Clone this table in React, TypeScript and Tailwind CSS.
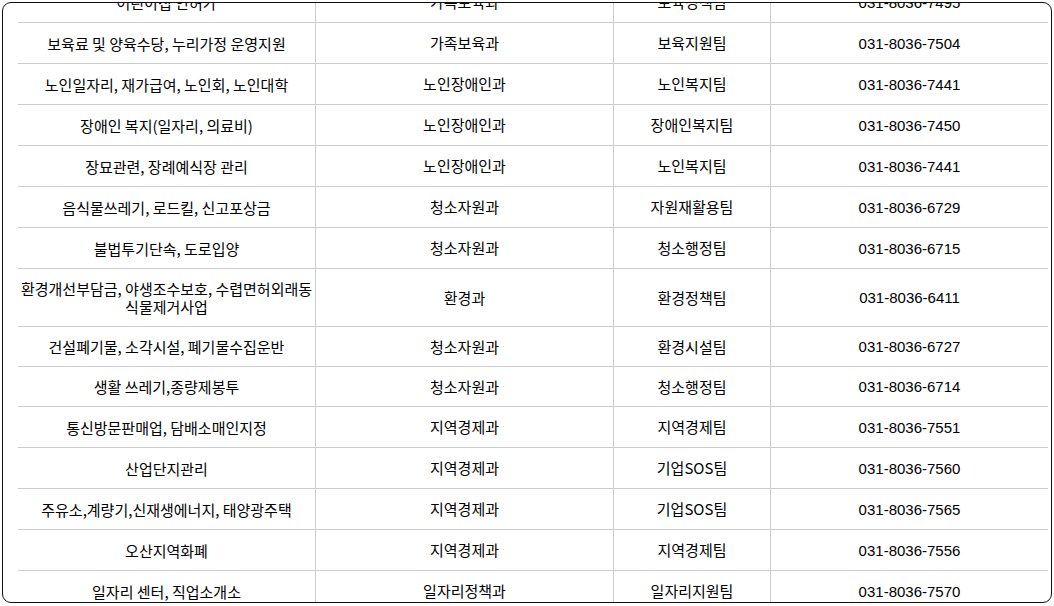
import React from "react";

type Row = { a: React.ReactNode; b: string; c: string; d: string; h: string };

const rows: Row[] = [
  { a: "어린이집 인허가", b: "가족보육과", c: "보육정책팀", d: "031-8036-7495", h: "h-[41px]" },
  { a: "보육료 및 양육수당, 누리가정 운영지원", b: "가족보육과", c: "보육지원팀", d: "031-8036-7504", h: "h-[41px]" },
  { a: "노인일자리, 재가급여, 노인회, 노인대학", b: "노인장애인과", c: "노인복지팀", d: "031-8036-7441", h: "h-[41px]" },
  { a: "장애인 복지(일자리, 의료비)", b: "노인장애인과", c: "장애인복지팀", d: "031-8036-7450", h: "h-[41px]" },
  { a: "장묘관련, 장례예식장 관리", b: "노인장애인과", c: "노인복지팀", d: "031-8036-7441", h: "h-[41px]" },
  { a: "음식물쓰레기, 로드킬, 신고포상금", b: "청소자원과", c: "자원재활용팀", d: "031-8036-6729", h: "h-[41px]" },
  { a: "불법투기단속, 도로입양", b: "청소자원과", c: "청소행정팀", d: "031-8036-6715", h: "h-[41px]" },
  {
    a: (
      <>
        환경개선부담금, 야생조수보호, 수렵면허외래동
        <br />
        식물제거사업
      </>
    ),
    b: "환경과",
    c: "환경정책팀",
    d: "031-8036-6411",
    h: "h-[58px]",
  },
  { a: "건설폐기물, 소각시설, 폐기물수집운반", b: "청소자원과", c: "환경시설팀", d: "031-8036-6727", h: "h-[40px]" },
  { a: "생활 쓰레기,종량제봉투", b: "청소자원과", c: "청소행정팀", d: "031-8036-6714", h: "h-[40px]" },
  { a: "통신방문판매업, 담배소매인지정", b: "지역경제과", c: "지역경제팀", d: "031-8036-7551", h: "h-[41px]" },
  { a: "산업단지관리", b: "지역경제과", c: "기업SOS팀", d: "031-8036-7560", h: "h-[41px]" },
  { a: "주유소,계량기,신재생에너지, 태양광주택", b: "지역경제과", c: "기업SOS팀", d: "031-8036-7565", h: "h-[41px]" },
  { a: "오산지역화폐", b: "지역경제과", c: "지역경제팀", d: "031-8036-7556", h: "h-[41px]" },
  { a: "일자리 센터, 직업소개소", b: "일자리정책과", c: "일자리지원팀", d: "031-8036-7570", h: "h-[41px]" },
];

export default function App() {
  return (
    <div className="w-[1054px] h-[606px] bg-white pt-[2px] pl-[2px]">
      <div className="w-[1050px] h-[601px] border border-[#111] rounded-[9px] overflow-hidden bg-white">
        <div
          className="ml-[15px] mt-[-21px] w-[1030px] text-[15px] text-black"
          style={{ fontFamily: '"Noto Sans CJK KR", sans-serif' }}
        >
          {rows.map((r, i) => (
            <div
              key={i}
              className={`grid grid-cols-[297px_298px_157px_278px] border-b border-[#cccccc] ${r.h}`}
            >
              <div className="flex items-center justify-center text-center leading-[18px] px-[1px] pt-[1px]">
                {r.a}
              </div>
              <div className="flex items-center justify-center text-center border-l border-[#cccccc] pt-[1px]">
                {r.b}
              </div>
              <div className="flex items-center justify-center text-center border-l border-[#cccccc] pt-[1px]">
                {r.c}
              </div>
              <div
                className="flex items-center justify-center text-center border-l border-[#cccccc] pt-[2px]"
                style={{ fontFamily: '"Liberation Sans", "Noto Sans CJK KR", sans-serif' }}
              >
                {r.d}
              </div>
            </div>
          ))}
        </div>
      </div>
    </div>
  );
}
